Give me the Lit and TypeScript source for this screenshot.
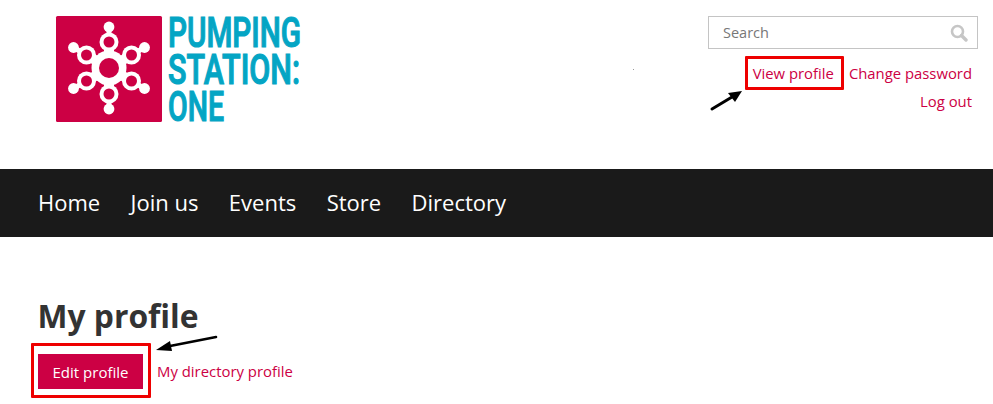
import { LitElement, html, css, svg } from "lit";
import { customElement } from "lit/decorators.js";

const angles = [-90, -30, 30, 90, 150, 210];
const pol = (r: number, a: number) => [r * Math.cos((a * Math.PI) / 180), r * Math.sin((a * Math.PI) / 180)];

@customElement("app-root")
export class AppRoot extends LitElement {
  static styles = css`
    :host { display: block; position: relative; height: 404px; overflow: hidden; background: #fff; font-family: "Open Sans", sans-serif; color: #333; }
    a { color: #cc0044; text-decoration: none; }
    .header { height: 169px; display: flex; justify-content: space-between; padding: 16px 15px 0 56px; box-sizing: border-box; }
    .logo { display: block; width: 300px; height: 112px; overflow: visible; }
    .side { width: 270px; display: flex; flex-direction: column; align-items: flex-end; }
    .search { width: 100%; height: 33px; box-sizing: border-box; border: 1px solid #c4c4c4; display: flex; align-items: center; justify-content: space-between; padding: 0 9px 0 14px; font-size: 14.5px; color: #777; }
    .links { font-size: 14.85px; line-height: 27.5px; text-align: right; padding: 11px 6px 0 0; }
    .links a { margin-left: 15px; }
    .nav { height: 68px; background: #1a1a1a; display: flex; align-items: center; gap: 30.4px; padding: 0 0 2px 38px; box-sizing: border-box; font-size: 22px; color: #fff; }
    .main { padding: 57px 38px 0; }
    h1 { margin: 0 0 0 -0.5px; font-size: 31.8px; line-height: 44px; font-weight: 700; color: #333; }
    .actions { display: flex; align-items: center; gap: 14px; margin-top: 16px; font-size: 14.9px; }
    .dir { padding-bottom: 2px; }
    .btn { width: 105px; height: 35px; background: #cc0044; color: #fff; display: flex; align-items: center; justify-content: center; font-size: 15px; }
    .mark { position: absolute; box-sizing: border-box; border: 3px solid #ee0000; border-radius: 1px; }
    .m1 { left: 745px; top: 56px; width: 99px; height: 34px; }
    .m2 { left: 31px; top: 343px; width: 120px; height: 55px; }
    .overlay { position: absolute; left: 0; top: 0; pointer-events: none; }
  `;

  logo() {
    return html`<svg class="logo" viewBox="56 16 300 112">
      <rect x="56" y="16" width="106" height="106" rx="1.5" fill="#cc0044"></rect>
      ${angles.map((a) => {
        const [x1, y1] = pol(26, a);
        const [x2, y2] = pol(41, a);
        return svg`<line x1="109" y1="68" x2=${109 + x1} y2=${68 + y1} stroke="#fff" stroke-width="10"></line>
          <line x1="109" y1="68" x2=${109 + x2} y2=${68 + y2} stroke="#fff" stroke-width="5"></line>
          <circle cx=${109 + x1} cy=${68 + y1} r="9.5" fill="#fff"></circle>
          <circle cx=${109 + x2} cy=${68 + y2} r="5.4" fill="#fff"></circle>`;
      })}
      <circle cx="109" cy="68" r="17.5" fill="#fff"></circle>
      <circle cx="109" cy="68" r="10" fill="#cc0044"></circle>
      ${angles.map((a) => {
        const [x1, y1] = pol(26, a);
        return svg`<circle cx=${109 + x1} cy=${68 + y1} r="5.5" fill="#cc0044"></circle>`;
      })}
      <g font-family="Roboto, sans-serif" font-weight="500" fill="#04a5c4" stroke="#04a5c4" stroke-width="1.2" font-size="42">
        <text x="168" y="47" textLength="133" lengthAdjust="spacingAndGlyphs">PUMPING</text>
        <text x="168" y="84" textLength="132" lengthAdjust="spacingAndGlyphs">STATION:</text>
        <text x="168" y="121" textLength="56" lengthAdjust="spacingAndGlyphs">ONE</text>
      </g>
    </svg>`;
  }

  render() {
    return html`
      <div class="header">
        ${this.logo()}
        <div class="side">
          <div class="search">
            <span>Search</span>
            <svg width="18" height="18" viewBox="0 0 18 18" fill="none" stroke="#c6c6c6">
              <circle cx="7.5" cy="7.5" r="5.5" stroke-width="2.6"></circle>
              <line x1="11.5" y1="11.5" x2="16" y2="16" stroke-width="3.4" stroke-linecap="round"></line>
            </svg>
          </div>
          <div class="links">
            <a href="#">View profile</a><a href="#">Change password</a><br />
            <a href="#">Log out</a>
          </div>
        </div>
      </div>
      <div class="nav"><span>Home</span><span>Join us</span><span>Events</span><span>Store</span><span>Directory</span></div>
      <div class="main">
        <h1>My profile</h1>
        <div class="actions"><a class="btn" href="#">Edit profile</a><a class="dir" href="#">My directory profile</a></div>
      </div>
      <div class="mark m1"></div>
      <div class="mark m2"></div>
      <svg class="overlay" width="993" height="404">
        <line x1="712" y1="109" x2="732" y2="97" stroke="#000" stroke-width="3" stroke-linecap="round"></line>
        <polygon points="742,91 735,102 728,93" fill="#000"></polygon>
        <line x1="216" y1="337" x2="170" y2="346" stroke="#000" stroke-width="2.6" stroke-linecap="round"></line>
        <polygon points="156,350 170,341 172,351" fill="#000"></polygon>
        <rect x="633" y="69" width="1" height="1" fill="#999"></rect>
      </svg>
    `;
  }
}
